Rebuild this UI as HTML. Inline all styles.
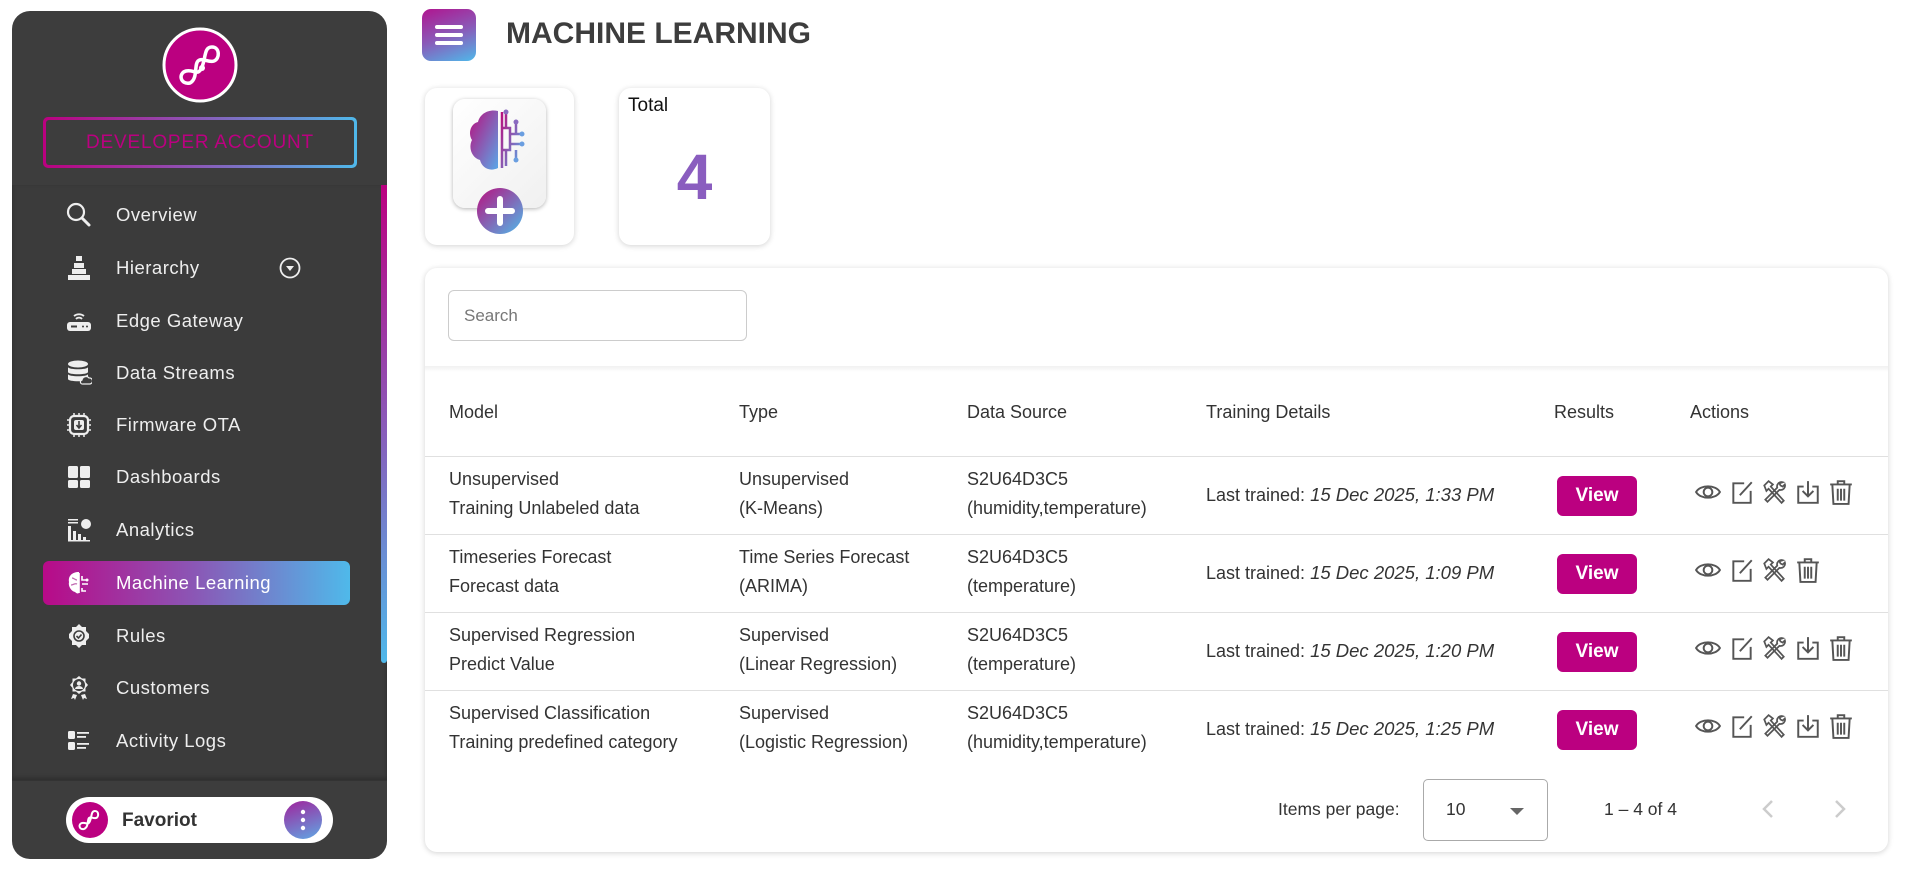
<!DOCTYPE html>
<html><head><meta charset="utf-8">
<style>
*{box-sizing:border-box;margin:0;padding:0}
body{width:1908px;height:871px;background:#fff;font-family:"Liberation Sans",Arial,sans-serif;position:relative;overflow:hidden;color:#333}
.abs{position:absolute}
.sb{left:12px;top:11px;width:375px;height:848px;background:#3d3d3d;border-radius:18px;overflow:hidden}
.nav{position:absolute;left:116px;color:#eee;font-size:18.5px;letter-spacing:.5px;transform:translateY(-50%);white-space:nowrap}
.ic{position:absolute;left:66px;width:26px;height:26px;transform:translateY(-50%)}
.card{background:#fff;border-radius:12px;box-shadow:0 1px 6px rgba(0,0,0,.18)}
.cell{position:absolute;font-size:18px;color:#333;line-height:29px;white-space:nowrap}
.cell i{font-size:18.5px}
.hline{position:absolute;left:425px;width:1463px;height:1px;background:#e0e0e0}
.view{position:absolute;left:1557px;width:80px;height:40px;background:#bb0080;border-radius:6px;color:#fff;font-weight:bold;font-size:19px;text-align:center;line-height:40px}
.acts{position:absolute;left:1695px;height:26px}
.acts svg{position:absolute;top:0}
</style></head><body>

<div class="abs sb">
  <div class="abs" style="left:0;top:174px;width:375px;height:595px;background:#3b3b3b;box-shadow:0 -2px 4px rgba(0,0,0,.25) inset"></div>
  <div class="abs" style="left:369px;top:174px;width:6px;height:478px;background:linear-gradient(#bb0080,#8a5ab8,#4fb8ea);border-radius:0 0 3px 3px"></div>
  <div class="abs" style="left:0;top:769px;width:375px;height:1px;background:#333"></div>
</div>
<svg class="abs" style="left:162px;top:27px" width="76" height="76" viewBox="0 0 76 76">
  <circle cx="38" cy="38" r="36" fill="#bb0080" stroke="#fff" stroke-width="3"/>
  <path d="M28 56 C18 58 16 46 24 44 C32 42 36 50 40 40 C44 30 42 20 50 20 C58 20 58 32 52 34 C46 36 40 30 36 34 C32 38 36 52 28 56Z" fill="none" stroke="#fff" stroke-width="3.5" stroke-linecap="round"/>
  <circle cx="40" cy="41" r="3" fill="#fff"/>
</svg>
<div class="abs" style="left:43px;top:117px;width:314px;height:51px;border-radius:5px;padding:3px;background:linear-gradient(90deg,#bb0080,#8a5ab8,#4fb8ea)">
  <div style="width:100%;height:100%;background:#3d3d3d;border-radius:3px;color:#bb0080;font-size:19px;text-align:center;line-height:45px;letter-spacing:.8px">DEVELOPER ACCOUNT</div>
</div>

<div class="abs" style="left:43px;top:561px;width:307px;height:44px;border-radius:6px;background:linear-gradient(90deg,#b80a88,#8a58b6,#4fb9ea)"></div>

<svg class="ic" style="top:215px" viewBox="0 0 26 26"><circle cx="10" cy="10" r="8" fill="none" stroke="#eee" stroke-width="2.2"/><path d="M16 16l7 7" stroke="#eee" stroke-width="3" stroke-linecap="round"/></svg>
<svg class="ic" style="top:268px" viewBox="0 0 26 26" fill="#eee"><rect x="10" y="1" width="6" height="5"/><rect x="8" y="8" width="10" height="5"/><rect x="6" y="14" width="14" height="5"/><rect x="2" y="20" width="22" height="5"/></svg>
<svg class="ic" style="top:321px" viewBox="0 0 26 26"><path d="M8 8a8 8 0 0 1 10 0M10 11a4 4 0 0 1 6 0" stroke="#eee" stroke-width="1.8" fill="none"/><rect x="1" y="14" width="24" height="9" rx="3" fill="#eee"/><rect x="5" y="17.5" width="6" height="2" fill="#3d3d3d"/><circle cx="17" cy="18.5" r="1" fill="#3d3d3d"/><circle cx="21" cy="18.5" r="1" fill="#3d3d3d"/></svg>
<svg class="ic" style="top:373px" viewBox="0 0 26 26" fill="#eee"><ellipse cx="12" cy="4" rx="10" ry="3.5"/><path d="M2 7c0 3 20 3 20 0v5c0 3-20 3-20 0zM2 14c0 3 20 3 20 0v5c0 3-20 3-20 0z"/><path d="M17 24h7a3 3 0 0 0-1-6a4 4 0 0 0-7 2a2 2 0 0 0 1 4z" fill="#3d3d3d" stroke="#eee" stroke-width="1.2"/></svg>
<svg class="ic" style="top:425px" viewBox="0 0 26 26"><rect x="4" y="4" width="18" height="18" rx="4" fill="none" stroke="#eee" stroke-width="2.2"/><rect x="8" y="8" width="10" height="10" rx="2" fill="#eee"/><path d="M13 9v6M10.5 13l2.5 3l2.5-3" stroke="#3d3d3d" stroke-width="1.6" fill="none"/><path d="M8 1v3M13 1v3M18 1v3M8 22v3M13 22v3M18 22v3M1 8h3M1 13h3M1 18h3M22 8h3M22 13h3M22 18h3" stroke="#eee" stroke-width="1.5"/></svg>
<svg class="ic" style="top:477px" viewBox="0 0 26 26" fill="#eee"><rect x="2" y="2" width="10" height="12" rx="1.5"/><rect x="14" y="2" width="10" height="12" rx="1.5"/><rect x="2" y="16" width="10" height="8" rx="1.5"/><rect x="14" y="16" width="10" height="8" rx="1.5"/></svg>
<svg class="ic" style="top:530px" viewBox="0 0 26 26" fill="#eee"><rect x="2" y="2" width="10" height="1.5"/><rect x="2" y="5" width="10" height="1.5"/><rect x="2" y="9" width="3" height="15"/><rect x="7" y="14" width="3" height="10"/><rect x="12" y="17" width="3" height="7"/><rect x="17" y="20" width="3" height="4"/><rect x="2" y="23" width="22" height="1.5"/><circle cx="20" cy="7" r="5"/></svg>
<svg class="ic" style="top:583px" viewBox="0 0 26 26"><path d="M13 2C6 2 2 6 3 12c-1 4 2 9 6 10c2 2 4 2 4 0z" fill="#fff"/><path d="M13 3v20M16 6v4h4M16 14h6M16 18v3h4" stroke="#fff" stroke-width="1.6" fill="none"/><circle cx="21" cy="10" r="1.5" fill="#fff"/><path d="M6 8c2 0 3 2 5 2M5 15c2 0 4-2 6-1" stroke="#c06ab0" stroke-width="1.3" fill="none"/></svg>
<svg class="ic" style="top:636px" viewBox="0 0 26 26"><path d="M13 1l3 3h4v4l3 3v4l-3 3v4h-4l-3 3l-3-3H6v-4l-3-3v-4l3-3V4h4z" fill="#eee"/><circle cx="13" cy="13" r="5" fill="none" stroke="#3d3d3d" stroke-width="1.6"/><path d="M10.5 13l2 2l3-3.5" stroke="#3d3d3d" stroke-width="1.6" fill="none"/></svg>
<svg class="ic" style="top:688px" viewBox="0 0 26 26"><path d="M13 1l3 2.5h3.5v3.5l2.5 3l-2.5 3v3.5h-3.5l-3 2.5l-3-2.5h-3.5v-3.5l-2.5-3l2.5-3V3.5h3.5z" fill="#eee"/><circle cx="13" cy="10" r="6" fill="#3d3d3d"/><circle cx="13" cy="8.5" r="2.2" fill="#eee"/><path d="M9 14a4 3 0 0 1 8 0z" fill="#eee"/><path d="M7 19l-2 5l3-1l1 2l2-5M19 19l2 5l-3-1l-1 2l-2-5" fill="#eee"/></svg>
<svg class="ic" style="top:741px" viewBox="0 0 26 26" fill="#eee"><rect x="2" y="3" width="7" height="8" rx="1.5"/><rect x="2" y="14" width="7" height="8" rx="1.5"/><rect x="11" y="4" width="12" height="1.8"/><rect x="11" y="8" width="9" height="1.8"/><rect x="11" y="15" width="12" height="1.8"/><rect x="11" y="19" width="9" height="1.8"/></svg>

<div class="nav" style="top:215px">Overview</div>
<div class="nav" style="top:268px">Hierarchy</div>
<svg class="abs" style="left:279px;top:257px" width="22" height="22" viewBox="0 0 22 22"><circle cx="11" cy="11" r="9.5" fill="none" stroke="#eee" stroke-width="1.8"/><path d="M7 9h8l-4 5z" fill="#eee"/></svg>
<div class="nav" style="top:321px">Edge Gateway</div>
<div class="nav" style="top:373px">Data Streams</div>
<div class="nav" style="top:425px">Firmware OTA</div>
<div class="nav" style="top:477px">Dashboards</div>
<div class="nav" style="top:530px">Analytics</div>
<div class="nav" style="top:583px;color:#fff">Machine Learning</div>
<div class="nav" style="top:636px">Rules</div>
<div class="nav" style="top:688px">Customers</div>
<div class="nav" style="top:741px">Activity Logs</div>

<div class="abs" style="left:66px;top:797px;width:267px;height:46px;background:#fff;border-radius:23px"></div>
<svg class="abs" style="left:72px;top:802px" width="36" height="36" viewBox="0 0 36 36"><circle cx="18" cy="18" r="18" fill="#bb0080"/><path d="M12 27C7 28 6 22 10 21C14 20 16 24 18 19C20 14 19 9 23 9C27 9 27 15 24 16C21 17 19 14 17 16C15 18 17 25 12 27Z" fill="none" stroke="#fff" stroke-width="2" stroke-linecap="round"/></svg>
<div class="abs" style="left:122px;top:810px;font-size:19px;font-weight:bold;color:#333">Favoriot</div>
<div class="abs" style="left:284px;top:801px;width:38px;height:38px;border-radius:50%;background:linear-gradient(160deg,#a0239c,#5fa8e4)"></div>
<svg class="abs" style="left:299px;top:809px" width="8" height="22" viewBox="0 0 8 22" fill="#fff"><circle cx="4" cy="3" r="2.2"/><circle cx="4" cy="11" r="2.2"/><circle cx="4" cy="19" r="2.2"/></svg>

<div class="abs" style="left:422px;top:9px;width:54px;height:52px;border-radius:9px;background:linear-gradient(160deg,#b0158f,#8a5ab8,#4fb9ea)"></div>
<svg class="abs" style="left:434px;top:20px" width="30" height="30" viewBox="0 0 30 30" fill="#fff"><rect x="1" y="5" width="28" height="4" rx="2"/><rect x="1" y="13" width="28" height="4" rx="2"/><rect x="1" y="21" width="28" height="4" rx="2"/></svg>
<div class="abs" style="left:506px;top:17px;font-size:30px;font-weight:bold;color:#3d3d3d">MACHINE LEARNING</div>

<div class="abs card" style="left:425px;top:88px;width:149px;height:157px"></div>
<div class="abs" style="left:453px;top:99px;width:93px;height:109px;border-radius:12px;background:linear-gradient(135deg,#fff,#f0f0f0);box-shadow:0 1px 4px rgba(0,0,0,.3)"></div>
<svg class="abs" style="left:466px;top:106px" width="70" height="80" viewBox="0 0 70 80">
  <defs><linearGradient id="bg" x1="0" y1="0" x2="1" y2="1"><stop offset="0" stop-color="#b8107f"/><stop offset="1" stop-color="#5aa8e8"/></linearGradient></defs>
  <path d="M32 5C22 3 14 8 12 16C4 18 2 28 6 34C2 42 6 52 14 54C16 62 24 66 32 62z" fill="url(#bg)"/>
  <path d="M36 6v56M36 22h8v22h-8M44 28h10M44 38h10M40 8v14M40 44v16M50 18v10M50 44v8" stroke="url(#bg)" stroke-width="2.5" fill="none"/>
  <circle cx="56" cy="28" r="2.5" fill="#6a9ee0"/><circle cx="56" cy="38" r="2.5" fill="#6a9ee0"/><circle cx="40" cy="6" r="2.5" fill="#8a6ac0"/><circle cx="50" cy="16" r="2.5" fill="#8a6ac0"/><circle cx="50" cy="54" r="2.5" fill="#6a9ee0"/>
</svg>
<svg class="abs" style="left:476px;top:187px" width="48" height="48" viewBox="0 0 48 48"><defs><linearGradient id="pg" x1="0" y1="0" x2="1" y2="1"><stop offset="0" stop-color="#b8107f"/><stop offset="1" stop-color="#4fbaea"/></linearGradient></defs><circle cx="24" cy="24" r="23" fill="url(#pg)"/><path d="M24 12v24M12 24h24" stroke="#fff" stroke-width="6" stroke-linecap="round"/></svg>

<div class="abs card" style="left:619px;top:88px;width:151px;height:157px"></div>
<div class="abs" style="left:628px;top:95px;font-size:19px;color:#111">Total</div>
<div class="abs" style="left:619px;top:140px;width:151px;text-align:center;font-size:64px;font-weight:bold;color:#8a5dbf">4</div>

<div class="abs card" style="left:425px;top:268px;width:1463px;height:584px"></div>
<div class="abs" style="left:448px;top:290px;width:299px;height:51px;border:1px solid #ccc;border-radius:6px;padding-left:15px;line-height:49px;font-size:17px;color:#777">Search</div>
<div class="abs" style="left:425px;top:366px;width:1463px;height:6px;background:linear-gradient(rgba(0,0,0,.06),rgba(0,0,0,0))"></div>

<div class="cell" style="left:449px;top:398px">Model</div>
<div class="cell" style="left:739px;top:398px">Type</div>
<div class="cell" style="left:967px;top:398px">Data Source</div>
<div class="cell" style="left:1206px;top:398px">Training Details</div>
<div class="cell" style="left:1554px;top:398px">Results</div>
<div class="cell" style="left:1690px;top:398px">Actions</div>

<div class="hline" style="top:456px"></div>
<div class="hline" style="top:534px"></div>
<div class="hline" style="top:612px"></div>
<div class="hline" style="top:690px"></div>

<div class="cell" style="left:449px;top:465px">Unsupervised<br>Training Unlabeled data</div>
<div class="cell" style="left:739px;top:465px">Unsupervised<br>(K-Means)</div>
<div class="cell" style="left:967px;top:465px">S2U64D3C5<br>(humidity,temperature)</div>
<div class="cell" style="left:1206px;top:480px">Last trained: <i>15 Dec 2025, 1:33 PM</i></div>
<div class="view" style="top:476px">View</div>

<div class="cell" style="left:449px;top:543px">Timeseries Forecast<br>Forecast data</div>
<div class="cell" style="left:739px;top:543px">Time Series Forecast<br>(ARIMA)</div>
<div class="cell" style="left:967px;top:543px">S2U64D3C5<br>(temperature)</div>
<div class="cell" style="left:1206px;top:558px">Last trained: <i>15 Dec 2025, 1:09 PM</i></div>
<div class="view" style="top:554px">View</div>

<div class="cell" style="left:449px;top:621px">Supervised Regression<br>Predict Value</div>
<div class="cell" style="left:739px;top:621px">Supervised<br>(Linear Regression)</div>
<div class="cell" style="left:967px;top:621px">S2U64D3C5<br>(temperature)</div>
<div class="cell" style="left:1206px;top:636px">Last trained: <i>15 Dec 2025, 1:20 PM</i></div>
<div class="view" style="top:632px">View</div>

<div class="cell" style="left:449px;top:699px">Supervised Classification<br>Training predefined category</div>
<div class="cell" style="left:739px;top:699px">Supervised<br>(Logistic Regression)</div>
<div class="cell" style="left:967px;top:699px">S2U64D3C5<br>(humidity,temperature)</div>
<div class="cell" style="left:1206px;top:714px">Last trained: <i>15 Dec 2025, 1:25 PM</i></div>
<div class="view" style="top:710px">View</div>

<svg width="0" height="0" style="position:absolute">
<defs>
 <g id="eye"><path d="M1 12C5 5 19 5 23 12C19 19 5 19 1 12Z" fill="none" stroke="#555" stroke-width="1.8"/><circle cx="12" cy="12" r="4" fill="none" stroke="#555" stroke-width="1.8"/></g>
 <g id="edit"><path d="M14 4H4v18h16V11" fill="none" stroke="#555" stroke-width="1.8"/><path d="M10 15L21 3" stroke="#555" stroke-width="1.8"/></g>
 <g id="tools"><path d="M3 6l4-4l4 3l-2 2l12 13l-2 2L7 9L5 11z" fill="none" stroke="#555" stroke-width="1.6"/><path d="M20 3a4 4 0 0 0-5 5L4 19l2 2L17 10a4 4 0 0 0 5-5l-2 2l-2-1l-1-2z" fill="none" stroke="#555" stroke-width="1.6"/></g>
 <g id="dl"><path d="M8 7H3v15h18V7h-5" fill="none" stroke="#555" stroke-width="1.8"/><path d="M12 2v13M7 11l5 5l5-5" fill="none" stroke="#555" stroke-width="1.8"/></g>
 <g id="trash"><path d="M2 5h20M9 5V2h6v3M4 5l1 18h14l1-18M9 9v11M12 9v11M15 9v11" fill="none" stroke="#555" stroke-width="1.8"/></g>
</defs></svg>

<div class="acts" style="top:479px"><svg style="left:0" width="26" height="26" viewBox="0 0 24 24"><use href="#eye"/></svg><svg style="left:34px" width="26" height="26" viewBox="0 0 24 24"><use href="#edit"/></svg><svg style="left:66px" width="26" height="26" viewBox="0 0 24 24"><use href="#tools"/></svg><svg style="left:100px" width="26" height="26" viewBox="0 0 24 24"><use href="#dl"/></svg><svg style="left:133px" width="26" height="26" viewBox="0 0 24 24"><use href="#trash"/></svg></div>
<div class="acts" style="top:557px"><svg style="left:0" width="26" height="26" viewBox="0 0 24 24"><use href="#eye"/></svg><svg style="left:34px" width="26" height="26" viewBox="0 0 24 24"><use href="#edit"/></svg><svg style="left:66px" width="26" height="26" viewBox="0 0 24 24"><use href="#tools"/></svg><svg style="left:100px" width="26" height="26" viewBox="0 0 24 24"><use href="#trash"/></svg></div>
<div class="acts" style="top:635px"><svg style="left:0" width="26" height="26" viewBox="0 0 24 24"><use href="#eye"/></svg><svg style="left:34px" width="26" height="26" viewBox="0 0 24 24"><use href="#edit"/></svg><svg style="left:66px" width="26" height="26" viewBox="0 0 24 24"><use href="#tools"/></svg><svg style="left:100px" width="26" height="26" viewBox="0 0 24 24"><use href="#dl"/></svg><svg style="left:133px" width="26" height="26" viewBox="0 0 24 24"><use href="#trash"/></svg></div>
<div class="acts" style="top:713px"><svg style="left:0" width="26" height="26" viewBox="0 0 24 24"><use href="#eye"/></svg><svg style="left:34px" width="26" height="26" viewBox="0 0 24 24"><use href="#edit"/></svg><svg style="left:66px" width="26" height="26" viewBox="0 0 24 24"><use href="#tools"/></svg><svg style="left:100px" width="26" height="26" viewBox="0 0 24 24"><use href="#dl"/></svg><svg style="left:133px" width="26" height="26" viewBox="0 0 24 24"><use href="#trash"/></svg></div>

<div class="abs" style="left:1278px;top:799px;font-size:17.5px;color:#333">Items per page:</div>
<div class="abs" style="left:1423px;top:779px;width:125px;height:62px;border:1px solid #aaa;border-radius:5px"></div>
<div class="abs" style="left:1446px;top:799px;font-size:17.5px;color:#333">10</div>
<svg class="abs" style="left:1509px;top:806px" width="16" height="10" viewBox="0 0 16 10"><path d="M1 2h14L8 9z" fill="#666"/></svg>
<div class="abs" style="left:1604px;top:799px;font-size:17.5px;color:#333">1 – 4 of 4</div>
<svg class="abs" style="left:1760px;top:798px" width="16" height="22" viewBox="0 0 16 22"><path d="M12 3L4 11l8 8" stroke="#ccc" stroke-width="2.5" fill="none"/></svg>
<svg class="abs" style="left:1832px;top:798px" width="16" height="22" viewBox="0 0 16 22"><path d="M4 3l8 8l-8 8" stroke="#ccc" stroke-width="2.5" fill="none"/></svg>

</body></html>
